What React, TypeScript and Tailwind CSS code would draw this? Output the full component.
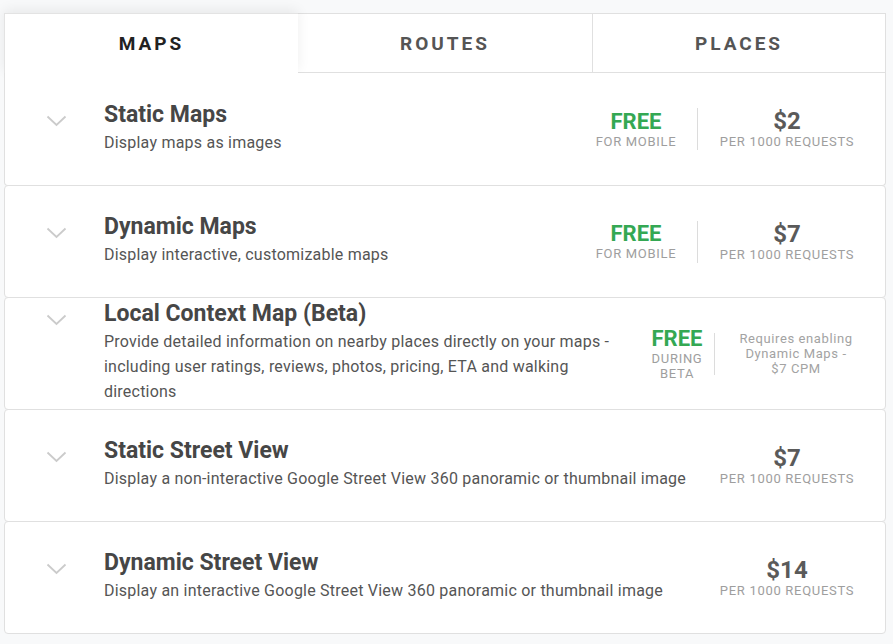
import React from "react";

type Row = {
  title: string;
  desc: string[];
  free?: { top: string; sub: string[]; w: number; mr: number };
  price?: { big: string; sub: string };
  note?: string[];
};

const rows: Row[] = [
  {
    title: "Static Maps",
    desc: ["Display maps as images"],
    free: { top: "FREE", sub: ["FOR MOBILE"], w: 82, mr: 20 },
    price: { big: "$2", sub: "PER 1000 REQUESTS" },
  },
  {
    title: "Dynamic Maps",
    desc: ["Display interactive, customizable maps"],
    free: { top: "FREE", sub: ["FOR MOBILE"], w: 82, mr: 20 },
    price: { big: "$7", sub: "PER 1000 REQUESTS" },
  },
  {
    title: "Local Context Map (Beta)",
    desc: [
      "Provide detailed information on nearby places directly on your maps -",
      "including user ratings, reviews, photos, pricing, ETA and walking",
      "directions",
    ],
    free: { top: "FREE", sub: ["DURING", "BETA"], w: 50, mr: 12 },
    note: ["Requires enabling", "Dynamic Maps -", "$7 CPM"],
  },
  {
    title: "Static Street View",
    desc: ["Display a non-interactive Google Street View 360 panoramic or thumbnail image"],
    price: { big: "$7", sub: "PER 1000 REQUESTS" },
  },
  {
    title: "Dynamic Street View",
    desc: ["Display an interactive Google Street View 360 panoramic or thumbnail image"],
    price: { big: "$14", sub: "PER 1000 REQUESTS" },
  },
];

function Chevron() {
  return (
    <svg width="21" height="12" viewBox="0 0 21 12" className="shrink-0">
      <path d="M1.5 1.5 L10.5 10 L19.5 1.5" fill="none" stroke="#cbcbcb" strokeWidth="1.8" />
    </svg>
  );
}

function Card({ row, first }: { row: Row; first: boolean }) {
  return (
    <div
      className={
        "relative z-20 flex h-[113px] items-center bg-white border border-[#e0e0e0] rounded-[4px] pb-[4px] pl-[41px] pr-[30px] " +
        (first ? "border-t-0 rounded-t-none" : "-mt-px")
      }
    >
      <div className="flex flex-1 items-start">
        <div className="mt-[15px]">
          <Chevron />
        </div>
        <div className="ml-[37px]">
          <div className="text-[23px] leading-[30px] font-bold text-[#464646]">{row.title}</div>
          {row.desc.map((d, i) => (
            <div key={i} className="text-[16px] leading-[25px] text-[#555] tracking-[0.22px]">
              {d}
            </div>
          ))}
        </div>
      </div>
      <div className="mt-[4px] flex items-center">
        {row.free && (
          <>
            <div className="flex flex-col items-center text-center" style={{ width: row.free.w, marginRight: row.free.mr }}>
              <div className="text-[22px] leading-[24px] font-bold text-[#34a853]">{row.free.top}</div>
              {row.free.sub.map((s, i) => (
                <div key={i} className="text-[13px] leading-[15px] tracking-[0.7px] text-[#9e9e9e] whitespace-nowrap">
                  {s}
                </div>
              ))}
            </div>
            <div className="w-px h-[42px] bg-[#dcdcdc]" />
          </>
        )}
        {row.price && (
          <div className="ml-[21px] flex w-[136px] flex-col items-center">
            <div className="text-[24px] leading-[26px] font-bold text-[#5a5a5a]">{row.price.big}</div>
            <div className="text-[13px] leading-[16px] tracking-[0.7px] text-[#9e9e9e] whitespace-nowrap">{row.price.sub}</div>
          </div>
        )}
        {row.note && (
          <div className="ml-[22px] flex w-[118px] flex-col items-center text-center">
            {row.note.map((n, i) => (
              <div key={i} className="text-[13px] leading-[15px] tracking-[0.6px] text-[#a3a3a3] whitespace-nowrap">
                {n}
              </div>
            ))}
          </div>
        )}
      </div>
    </div>
  );
}

export default function App() {
  return (
    <div
      className="min-h-[644px] w-[893px] bg-[#f8f9fa] pt-[13px] pl-[4px]"
      style={{ fontFamily: "Roboto, 'Liberation Sans', sans-serif" }}
    >
      <div className="w-[882px]">
        <div className="grid h-[60px] grid-cols-3">
          <div className="relative z-10 flex items-center justify-center bg-white border-t border-l border-[#e3e3e3] shadow-[0_-3px_12px_rgba(0,0,0,0.07)]">
            <span className="mt-[2px] text-[19px] font-bold tracking-[3px] text-[#222]">MAPS</span>
          </div>
          <div className="flex items-center justify-center bg-white border-t border-b border-[#e0e0e0]">
            <span className="mt-[2px] text-[19px] font-bold tracking-[3px] text-[#555]">ROUTES</span>
          </div>
          <div className="flex items-center justify-center bg-white border-t border-b border-l border-r border-[#e0e0e0]">
            <span className="mt-[2px] text-[19px] font-bold tracking-[3px] text-[#555]">PLACES</span>
          </div>
        </div>
        {rows.map((r, i) => (
          <Card key={i} row={r} first={i === 0} />
        ))}
      </div>
    </div>
  );
}
